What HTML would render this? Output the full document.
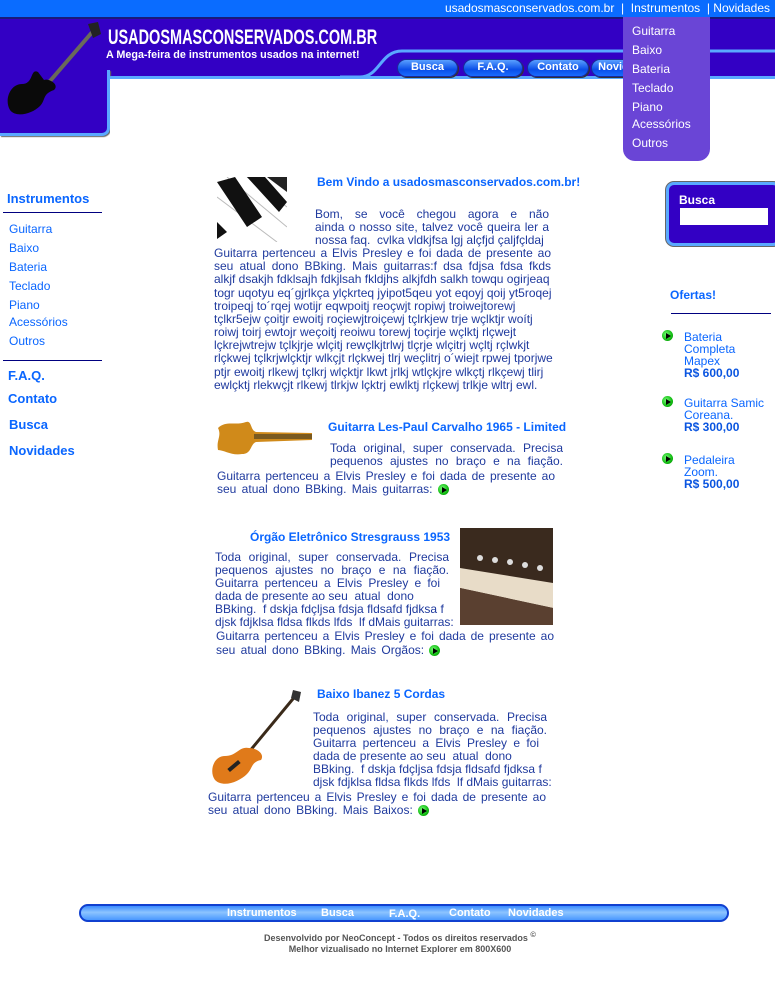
<!DOCTYPE html>
<html><head><meta charset="utf-8"><style>
*{margin:0;padding:0;box-sizing:border-box}
body{width:775px;height:1000px;position:relative;background:#fff;font-family:"Liberation Sans",Arial,sans-serif;overflow:hidden}
.a{position:absolute;white-space:nowrap}
.t{position:absolute;font-size:12px;color:#1f3a9e;white-space:nowrap;line-height:13px}
.j{text-align:justify;text-align-last:justify;white-space:normal;height:13px;overflow:hidden}
.h{position:absolute;font-size:12px;font-weight:bold;color:#0a66ff;white-space:nowrap}
.nv{position:absolute;font-size:12px;color:#0a66ff;left:9px}
.nb{position:absolute;font-size:13px;font-weight:bold;color:#0a66ff}
.btn{position:absolute;top:59px;height:18px;border-radius:9px;background:linear-gradient(#5aa0ff,#0a4ee8 60%,#1a6cff);border:1px solid #1a2a99;color:#fff;font-size:11px;font-weight:bold;text-align:center;line-height:15px;box-shadow:1px 1px 0 #333}
.dd{position:absolute;left:632px;font-size:12px;color:#fff}
.ar{display:inline-block;width:11px;height:11px;border-radius:50%;background:radial-gradient(circle at 40% 40%,#7f7,#1b1 60%,#070);position:relative;vertical-align:-2px}
.ar:after{content:"";position:absolute;left:4px;top:2.5px;border-left:5px solid #000;border-top:3px solid transparent;border-bottom:3px solid transparent}
.fb{position:absolute;top:907px;font-size:11px;font-weight:bold;color:#fff}
</style></head><body>
<!-- header -->
<div class="a" style="left:0;top:0;width:775px;height:17px;background:#0a6cff"></div>
<div class="a" style="right:5px;top:1px;font-size:12px;color:#fff">usadosmasconservados.com.br &nbsp;| &nbsp;Instrumentos &nbsp;| Novidades</div>
<div class="a" style="left:0;top:17px;width:775px;height:62px;background:#3300c4;border-top:2px solid #1a1a7a"></div>
<div class="a" style="left:0;top:70px;width:110px;height:66px;background:#3300c4;border-right:3px solid #5aa8ff;border-bottom:3px solid #5aa8ff;border-bottom-right-radius:8px;box-shadow:1px 1px 1px #666"></div>
<div class="a" style="left:107px;top:76px;width:668px;height:4px;border-top:3px solid #5aa8ff;border-left:3px solid #5aa8ff;border-top-left-radius:8px;background:#fff"></div>
<div class="a" style="left:110px;top:79px;width:665px;height:56px;background:#fff"></div>
<svg class="a" style="left:340px;top:44px" width="435" height="36"><path d="M0 33 L20 33 C40 33 40 7 62 7 L435 7" fill="none" stroke="#5aa8ff" stroke-width="3"/></svg>
<svg class="a" style="left:2px;top:22px" width="105" height="95"><path d="M92 8 L42 66" stroke="#6a6a5a" stroke-width="4"/><path d="M86 2 l10 -2 l3 12 l-8 4z" fill="#222"/><path d="M36 50 C28 46 32 62 20 62 C8 62 2 78 8 88 C14 96 30 92 38 84 C44 78 40 72 52 68 C58 62 46 56 42 58 Z" fill="#0a0a0a"/></svg>
<div class="a" style="left:108px;top:26px;font-size:21px;font-weight:bold;color:#fff;transform:scaleX(0.69);transform-origin:left">USADOSMASCONSERVADOS.COM.BR</div>
<div class="a" style="left:106px;top:49px;font-size:11px;font-weight:bold;color:#fff;transform:scaleX(0.98);transform-origin:left">A Mega-feira de instrumentos usados na internet!</div>
<div class="btn" style="left:397px;width:61px">Busca</div>
<div class="btn" style="left:463px;width:60px">F.A.Q.</div>
<div class="btn" style="left:527px;width:62px">Contato</div>
<div class="btn" style="left:591px;width:70px">Novidades</div>
<div class="a" style="left:623px;top:17px;width:87px;height:144px;background:#6a45d6;border-radius:0 0 12px 12px"></div>
<div class="dd" style="top:24px">Guitarra</div><div class="dd" style="top:43px">Baixo</div><div class="dd" style="top:62px">Bateria</div><div class="dd" style="top:81px">Teclado</div><div class="dd" style="top:100px">Piano</div><div class="dd" style="top:117px">Acessórios</div><div class="dd" style="top:136px">Outros</div>
<!-- left nav -->
<div class="nb" style="left:7px;top:191px">Instrumentos</div>
<div class="a" style="left:3px;top:212px;width:99px;height:1px;background:#000080"></div>
<div class="nv" style="top:222px">Guitarra</div><div class="nv" style="top:241px">Baixo</div><div class="nv" style="top:260px">Bateria</div><div class="nv" style="top:279px">Teclado</div><div class="nv" style="top:298px">Piano</div><div class="nv" style="top:315px">Acessórios</div><div class="nv" style="top:334px">Outros</div>
<div class="a" style="left:3px;top:360px;width:99px;height:1px;background:#000080"></div>
<div class="nb" style="left:8px;top:368px">F.A.Q.</div><div class="nb" style="left:8px;top:391px">Contato</div><div class="nb" style="left:9px;top:417px">Busca</div><div class="nb" style="left:9px;top:443px">Novidades</div>
<!-- right -->
<div class="a" style="left:666px;top:182px;width:115px;height:64px;background:#3300c4;border:3px solid #5aa8ff;border-radius:8px;box-shadow:0 0 0 1px #666"></div>
<div class="a" style="left:679px;top:193px;font-size:12px;font-weight:bold;color:#fff">Busca</div>
<div class="a" style="left:680px;top:208px;width:88px;height:17px;background:#fff"></div>
<div class="nb" style="left:670px;top:288px;font-size:12px">Ofertas!</div>
<div class="a" style="left:671px;top:313px;width:100px;height:1px;background:#000080"></div>
<span class="ar" style="position:absolute;left:662px;top:330px"></span><span class="ar" style="position:absolute;left:662px;top:396px"></span><span class="ar" style="position:absolute;left:662px;top:453px"></span>
<div class="a" style="left:684px;top:331px;font-size:12px;color:#0a66ff;line-height:12px">Bateria<br>Completa<br>Mapex<br><b style="color:#0a55e0">R$ 600,00</b></div>
<div class="a" style="left:684px;top:397px;font-size:12px;color:#0a66ff;line-height:12px">Guitarra Samic<br>Coreana.<br><b style="color:#0a55e0">R$ 300,00</b></div>
<div class="a" style="left:684px;top:454px;font-size:12px;color:#0a66ff;line-height:12px">Pedaleira<br>Zoom.<br><b style="color:#0a55e0">R$ 500,00</b></div>
<!-- block 1 -->
<svg class="a" style="left:217px;top:177px" width="70" height="65"><rect width="70" height="65" fill="#fff"/><g stroke="#bbb"><path d="M0 20 L60 65 M10 0 L70 50 M30 0 L70 30"/></g><path d="M0 5 L18 0 L45 40 L30 50 Z M30 0 L48 0 L70 25 L62 35 Z M0 45 L10 55 L0 62Z" fill="#111"/><path d="M50 0 L70 0 L70 15Z" fill="#222"/></svg>
<div class="h" style="left:317px;top:175px">Bem Vindo a usadosmasconservados.com.br!</div>
<div class="t j" style="left:315px;top:208px;width:234px">Bom, se você chegou agora e não conhecia</div>
<div class="t j" style="left:315px;top:221px;width:234px">ainda o nosso site, talvez você queira ler a</div>
<div class="t" style="left:315px;top:234px">nossa faq.&nbsp; cvlka vldkjfsa lgj alçfjd çaljfçldaj</div>
<div class="t j" style="left:214px;top:247px;width:337px">Guitarra pertenceu a Elvis Presley e foi dada de presente ao</div>
<div class="t j" style="left:214px;top:260px;width:337px">seu atual dono BBking. Mais guitarras:f dsa fdjsa fdsa fkds</div>
<div class="t" style="left:214px;top:273px">alkjf dsakjh fdklsajh fdkjlsah fkldjhs alkjfdh salkh towqu ogirjeaq</div>
<div class="t" style="left:214px;top:287px">togr uqotyu eq´gjrlkça ylçkrteq jyipot5qeu yot eqoyj qoij yt5roqej</div>
<div class="t" style="left:214px;top:300px">troipeqj to´rqej wotijr eqwpoitj reoçwjt ropiwj troiwejtorewj</div>
<div class="t" style="left:214px;top:313px">tçlkr5ejw çoitjr ewoitj roçiewjtroiçewj tçlrkjew trje wçlktjr woítj</div>
<div class="t" style="left:214px;top:326px">roiwj toirj ewtojr weçoitj reoiwu torewj toçirje wçlktj rlçwejt</div>
<div class="t" style="left:214px;top:339px">lçkrejwtrejw tçlkjrje wlçitj rewçlkjtrlwj tlçrje wlçitrj wçltj rçlwkjt</div>
<div class="t" style="left:214px;top:352px">rlçkwej tçlkrjwlçktjr wlkçjt rlçkwej tlrj weçlitrj o´wiejt rpwej tporjwe</div>
<div class="t" style="left:214px;top:366px">ptjr ewoitj rlkewj tçlkrj wlçktjr lkwt jrlkj wtlçkjre wlkçtj rlkçewj tlirj</div>
<div class="t" style="left:214px;top:379px">ewlçktj rlekwçjt rlkewj tlrkjw lçktrj ewlktj rlçkewj trlkje wltrj ewl.</div>
<!-- block 2 -->
<svg class="a" style="left:216px;top:420px" width="98" height="37"><path d="M2 8 C10 0 20 6 30 2 C36 0 34 10 40 12 L96 13 L96 20 L40 22 C34 24 36 34 26 34 C16 36 8 30 2 30 C0 20 6 16 2 8Z" fill="#d08a1a"/><rect x="38" y="14" width="58" height="5" fill="#7a5a20"/></svg>
<div class="h" style="left:328px;top:420px">Guitarra Les-Paul Carvalho 1965 - Limited</div>
<div class="t j" style="left:330px;top:442px;width:233px">Toda original, super conservada. Precisa</div>
<div class="t j" style="left:330px;top:455px;width:233px">pequenos ajustes no braço e na fiação.</div>
<div class="t j" style="left:217px;top:470px;width:338px">Guitarra pertenceu a Elvis Presley e foi dada de presente ao</div>
<div class="t" style="left:217px;top:483px;word-spacing:2px">seu atual dono BBking. Mais guitarras: <span class="ar"></span></div>
<!-- block 3 -->
<div class="h" style="left:250px;top:530px">Órgão Eletrônico Stresgrauss 1953</div>
<svg class="a" style="left:460px;top:528px" width="93" height="97"><rect width="93" height="97" fill="#3a2a1e"/><path d="M0 40 L93 55 L93 80 L0 60Z" fill="#e8dcc8"/><path d="M0 60 L93 80 L93 97 L0 97Z" fill="#5a4030"/><g fill="#ddd"><circle cx="20" cy="30" r="3"/><circle cx="35" cy="32" r="3"/><circle cx="50" cy="34" r="3"/><circle cx="65" cy="37" r="3"/><circle cx="80" cy="40" r="3"/></g></svg>
<div class="t j" style="left:215px;top:551px;width:234px">Toda original, super conservada. Precisa</div>
<div class="t j" style="left:215px;top:564px;width:234px">pequenos ajustes no braço e na fiação.</div>
<div class="t j" style="left:215px;top:577px;width:225px">Guitarra pertenceu a Elvis Presley e foi</div>
<div class="t" style="left:215px;top:590px">dada de presente ao seu&nbsp; atual&nbsp; dono</div>
<div class="t" style="left:215px;top:603px">BBking.&nbsp; f dskja fdçljsa fdsja fldsafd fjdksa f</div>
<div class="t" style="left:215px;top:616px">djsk fdjklsa fldsa flkds lfds&nbsp; lf dMais guitarras:</div>
<div class="t j" style="left:216px;top:630px;width:338px">Guitarra pertenceu a Elvis Presley e foi dada de presente ao</div>
<div class="t" style="left:216px;top:644px;word-spacing:2px">seu atual dono BBking. Mais Orgãos: <span class="ar"></span></div>
<!-- block 4 -->
<svg class="a" style="left:209px;top:690px" width="93" height="96"><path d="M88 4 L40 62" stroke="#3a2a1a" stroke-width="3"/><path d="M84 0 l8 2 l-2 10 l-8 -4z" fill="#333"/><path d="M40 58 C30 56 28 66 16 66 C4 66 0 82 6 90 C14 98 30 92 38 84 C44 78 42 72 52 70 C56 64 48 58 40 58Z" fill="#e07a1a"/><rect x="18" y="74" width="14" height="4" fill="#222" transform="rotate(-40 25 76)"/></svg>
<div class="h" style="left:317px;top:687px">Baixo Ibanez 5 Cordas</div>
<div class="t j" style="left:313px;top:711px;width:234px">Toda original, super conservada. Precisa</div>
<div class="t j" style="left:313px;top:724px;width:234px">pequenos ajustes no braço e na fiação.</div>
<div class="t j" style="left:313px;top:737px;width:226px">Guitarra pertenceu a Elvis Presley e foi</div>
<div class="t" style="left:313px;top:750px">dada de presente ao seu&nbsp; atual&nbsp; dono</div>
<div class="t" style="left:313px;top:763px">BBking.&nbsp; f dskja fdçljsa fdsja fldsafd fjdksa f</div>
<div class="t" style="left:313px;top:776px">djsk fdjklsa fldsa flkds lfds&nbsp; lf dMais guitarras:</div>
<div class="t j" style="left:208px;top:791px;width:338px">Guitarra pertenceu a Elvis Presley e foi dada de presente ao</div>
<div class="t" style="left:208px;top:804px;word-spacing:2px">seu atual dono BBking. Mais Baixos: <span class="ar"></span></div>
<!-- footer -->
<div class="a" style="left:79px;top:904px;width:650px;height:18px;border-radius:9px;background:linear-gradient(#3a8cff,#8cc4ff 45%,#4a98ff);border:2px solid #1040d0"></div>
<div class="fb" style="left:227px">Instrumentos</div><div class="fb" style="left:321px">Busca</div><div class="fb" style="left:389px;top:908px">F.A.Q.</div><div class="fb" style="left:449px">Contato</div><div class="fb" style="left:508px">Novidades</div>
<div class="a" style="left:0;width:800px;top:929px;text-align:center;font-size:9px;font-weight:bold;color:#555;line-height:11px">Desenvolvido por NeoConcept - Todos os direitos reservados <sup>©</sup><br>Melhor vizualisado no Internet Explorer em 800X600</div>
</body></html>
